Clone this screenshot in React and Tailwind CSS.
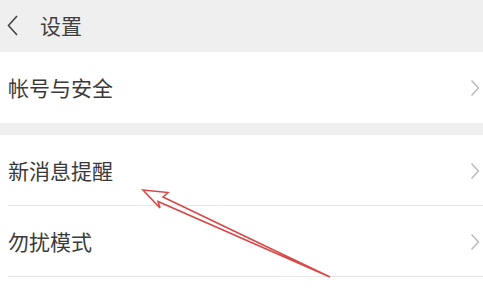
const Chevron = () => (
    <svg width="10" height="18" viewBox="0 0 10 18" className="shrink-0">
        <path d="M1.5 1.5 L8.5 9 L1.5 16.5" fill="none" stroke="#b8b8b8" strokeWidth="1.4" />
    </svg>
);

const Row = ({ label, divider }) => (
    <div className="h-[71px] flex items-center justify-between pr-[3px] pl-2 relative">
        <span className="text-[21px] text-[#3a3a3a] leading-none">{label}</span>
        <Chevron />
        {divider && <div className="absolute left-2 right-0 bottom-0 h-px bg-[#e6e6e6]"></div>}
    </div>
);

export default function App() {
    return (
        <div
            className="w-[483px] h-[290px] overflow-hidden bg-white relative"
            style={{ fontFamily: '"Noto Sans CJK SC", "Noto Sans", sans-serif' }}
        >
            <div className="h-[52px] bg-[#efefef] flex items-center pl-[7px] gap-[22px] pb-[2px]">
                <svg width="11" height="21" viewBox="0 0 11 21">
                    <path d="M10 1 L1.5 10.5 L10 20" fill="none" stroke="#444" strokeWidth="1.6" />
                </svg>
                <span className="text-[21px] text-[#404040] leading-none">设置</span>
            </div>
            <Row label="帐号与安全" />
            <div className="h-3 bg-[#efefef]"></div>
            <Row label="新消息提醒" divider />
            <Row label="勿扰模式" divider />

            <svg className="absolute left-0 top-0 pointer-events-none" width="483" height="290">
                <polygon
                    points="143,190 168,192.5 163,197 330,277 158,201.5 160,208"
                    fill="none"
                    stroke="#d94848"
                    strokeWidth="1.6"
                    strokeLinejoin="miter"
                />
            </svg>
        </div>
    );
}
